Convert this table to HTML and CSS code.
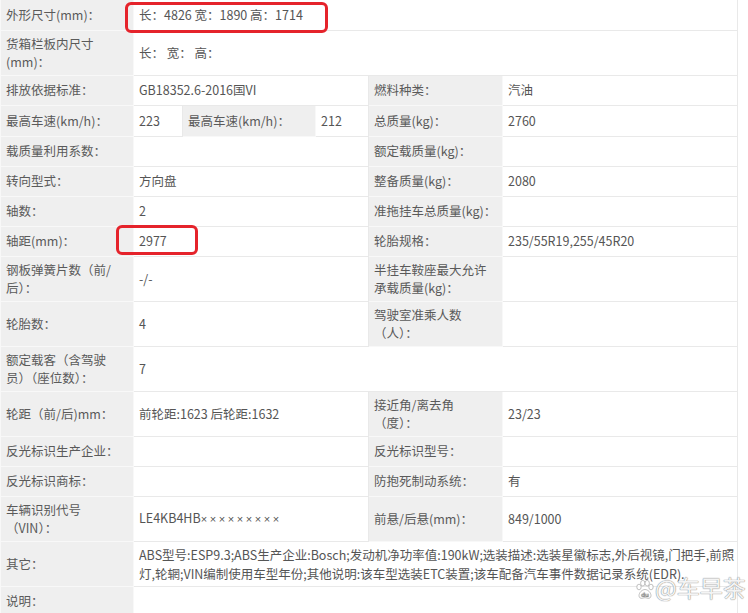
FILE: index.html
```html
<!DOCTYPE html>
<html lang="zh-CN">
<head>
    <meta charset="UTF-8">
    <title>车辆参数</title>
    <link rel="stylesheet" href="styles.css">
</head>
<body>

<div class="sheet">
    <table class="spec">
        <colgroup>
            <col class="c-label">
            <col class="c-a">
            <col class="c-b">
            <col class="c-c">
            <col class="c-label2">
            <col class="c-value2">
        </colgroup>
        <tr>
            <th>外形尺寸(mm)：</th>
            <td colspan="5" class="marked"><span class="mark mark-size"></span>长：4826 宽：1890 高：1714</td>
        </tr>
        <tr class="tall">
            <th>货箱栏板内尺寸(mm)：</th>
            <td colspan="5">长： 宽： 高：</td>
        </tr>
        <tr>
            <th>排放依据标准：</th>
            <td colspan="3">GB18352.6-2016国VI</td>
            <th>燃料种类：</th>
            <td>汽油</td>
        </tr>
        <tr class="speed">
            <th>最高车速(km/h)：</th>
            <td>223</td>
            <th>最高车速(km/h)：</th>
            <td>212</td>
            <th>总质量(kg)：</th>
            <td>2760</td>
        </tr>
        <tr>
            <th>载质量利用系数：</th>
            <td colspan="3"></td>
            <th>额定载质量(kg)：</th>
            <td></td>
        </tr>
        <tr>
            <th>转向型式：</th>
            <td colspan="3">方向盘</td>
            <th>整备质量(kg)：</th>
            <td>2080</td>
        </tr>
        <tr>
            <th>轴数：</th>
            <td colspan="3">2</td>
            <th>准拖挂车总质量(kg)：</th>
            <td></td>
        </tr>
        <tr>
            <th>轴距(mm)：</th>
            <td colspan="3" class="marked"><span class="mark mark-base"></span>2977</td>
            <th>轮胎规格：</th>
            <td>235/55R19,255/45R20</td>
        </tr>
        <tr class="tall">
            <th>钢板弹簧片数（前/后）：</th>
            <td colspan="3">-/-</td>
            <th>半挂车鞍座最大允许承载质量(kg)：</th>
            <td></td>
        </tr>
        <tr class="tall">
            <th>轮胎数：</th>
            <td colspan="3">4</td>
            <th>驾驶室准乘人数（人）：</th>
            <td></td>
        </tr>
        <tr class="tall">
            <th>额定载客（含驾驶员）（座位数）：</th>
            <td colspan="5">7</td>
        </tr>
        <tr class="tall">
            <th>轮距（前/后)mm：</th>
            <td colspan="3">前轮距:1623 后轮距:1632</td>
            <th>接近角/离去角（度）：</th>
            <td>23/23</td>
        </tr>
        <tr>
            <th>反光标识生产企业：</th>
            <td colspan="3"></td>
            <th>反光标识型号：</th>
            <td></td>
        </tr>
        <tr>
            <th>反光标识商标：</th>
            <td colspan="3"></td>
            <th>防抱死制动系统：</th>
            <td>有</td>
        </tr>
        <tr class="tall">
            <th>车辆识别代号（VIN）：</th>
            <td colspan="3">LE4KB4HB<span class="masked">×××××××××</span></td>
            <th>前悬/后悬(mm)：</th>
            <td>849/1000</td>
        </tr>
        <tr class="tall">
            <th>其它：</th>
            <td colspan="5" class="long">ABS型号:ESP9.3;ABS生产企业:Bosch;发动机净功率值:190kW;选装描述:选装星徽标志,外后视镜,门把手,前照灯,轮辋;VIN编制使用车型年份;其他说明:该车型选装ETC装置;该车配备汽车事件数据记录系统(EDR).</td>
        </tr>
        <tr>
            <th>说明：</th>
            <td colspan="5"></td>
        </tr>
    </table>

    <div class="watermark">
        <svg class="paw" width="18" height="20" viewBox="0 0 18 20">
            <ellipse cx="3" cy="7" rx="2.2" ry="2.8"/>
            <ellipse cx="6.8" cy="3.2" rx="2.2" ry="2.8"/>
            <ellipse cx="11.2" cy="3.2" rx="2.2" ry="2.8"/>
            <ellipse cx="15" cy="7" rx="2.2" ry="2.8"/>
            <path d="M9 9.5c-3 0-6 3.2-6 6.2 0 2 1.6 3 3.3 2.6 1-0.2 1.8-0.6 2.7-0.6s1.7 0.4 2.7 0.6c1.7 0.4 3.3-0.6 3.3-2.6 0-3-3-6.2-6-6.2z"/>
            <text x="9" y="16.6" text-anchor="middle">du</text>
        </svg>
        <span>@车早茶</span>
    </div>
</div>

</body>
</html>
```

FILE: styles.css
```css
* {
    margin: 0;
    padding: 0;
}

body {
    background: white;
    font-family: "Noto Sans CJK SC", "Noto Sans", sans-serif;
    font-size: 12.5px;
    color: #555;
}

.sheet {
    position: relative;
    width: 748px;
    height: 613px;
    overflow: hidden;
}

.spec {
    width: 737px;
    table-layout: fixed;
    border-collapse: collapse;
}

.c-label { width: 133px; }
.c-a { width: 49px; }
.c-b { width: 133px; }
.c-c { width: 53px; }
.c-label2 { width: 134px; }
.c-value2 { width: 235px; }

.spec tr {
    height: 30px;
}

.spec tr.speed {
    height: 31px;
}

.spec tr.tall {
    height: 45px;
}

.spec th,
.spec td {
    border: 1px solid #e9e9e9;
    padding: 0 5px;
    text-align: left;
    vertical-align: middle;
    font-weight: normal;
    line-height: 18px;
}

.spec th {
    background-color: #efefef;
    border-color: #f8f8f8;
    color: #5a5a5a;
}

.spec tr:first-child th,
.spec tr:first-child td {
    border-top: none;
}

/* 左侧标签列的换行宽度比右侧窄 */
.spec tr > th:first-child {
    padding-right: 10px;
}

.spec td.long {
    line-height: 19px;
    padding-right: 2px;
}

/* VIN 后半段用窄的乘号 */
.masked {
    font-family: "Liberation Sans", sans-serif;
    font-size: 11px;
    letter-spacing: 2.6px;
}

.marked {
    position: relative;
}

/* 红色标注框 */
.mark {
    position: absolute;
    border: 3px solid #e5232b;
    border-radius: 6px;
}

.mark-size {
    left: -9px;
    top: 2px;
    width: 197px;
    height: 25px;
}

.mark-base {
    left: -18px;
    top: -2px;
    width: 76px;
    height: 24px;
}

.watermark {
    position: absolute;
    left: 636px;
    top: 570px;
    display: flex;
    align-items: center;
    gap: 1px;
    font-size: 23px;
    color: rgba(255, 255, 255, 0.92);
    text-shadow: 0 0 1px #8a8a8a, 0 0 1px #8a8a8a;
}

.paw {
    fill: rgba(255, 255, 255, 0.92);
    stroke: #999;
    stroke-width: 0.6;
    margin-top: 5px;
}

.paw text {
    font-size: 6px;
    font-family: "DejaVu Sans", sans-serif;
    fill: #888;
    stroke: none;
}
```
